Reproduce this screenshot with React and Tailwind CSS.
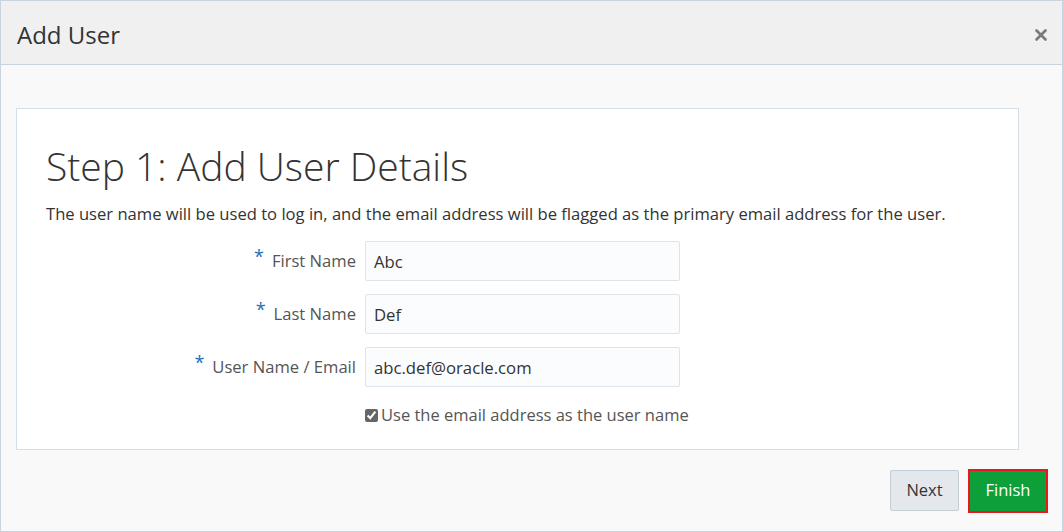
import { X } from 'lucide-react';

const fields = [
  { label: 'First Name', value: 'Abc' },
  { label: 'Last Name', value: 'Def' },
  { label: 'User Name / Email', value: 'abc.def@oracle.com' },
];

export default function App() {
  return (
    <div className="w-[1063px] h-[532px] border border-[#c7d3de] bg-[#f9f9f9] flex flex-col text-[#333] font-['Open_Sans',sans-serif]">
      {/* Header */}
      <div className="h-[64px] shrink-0 bg-[#f0f0f0] border-b border-[#c7d3de] flex items-center justify-between pl-[16px] pr-[12px] pt-[5px]">
        <h1 className="text-[24px] text-[#333]">Add User</h1>
        <X className="w-[18px] h-[18px] text-[#7a7a7a]" strokeWidth={3.5} />
      </div>

      {/* Body */}
      <div className="flex-1 px-[15px] pt-[43px]">
        <div className="w-[1003px] h-[342px] bg-white border border-[#d6dfe6] pl-[29px] pt-[33px]">
          <h2 className="text-[39px] font-light text-[#333] leading-[48px]">Step 1: Add User Details</h2>
          <p className="mt-[14px] text-[16.6px] text-[#333] leading-[20px]">
            The user name will be used to log in, and the email address will be flagged as the primary email address for the user.
          </p>

          <div className="mt-[17px] flex flex-col gap-[13px]">
            {fields.map(f => (
              <div key={f.label} className="flex items-center">
                <label className="w-[319px] pr-[9px] text-right text-[16.6px] text-[#555] flex justify-end items-start">
                  <span className="text-[#1d6fb8] text-[18px] leading-[14px] mr-[8px]">*</span>
                  <span>{f.label}</span>
                </label>
                <input
                  readOnly
                  value={f.value}
                  className="w-[315px] h-[40px] border border-[#dfe4ea] rounded-[2px] bg-[#fbfcfd] px-[8px] text-[16.7px] text-[#333] outline-none"
                />
              </div>
            ))}
          </div>

          <div className="mt-[16px] ml-[319px] flex items-center">
            <input type="checkbox" checked readOnly className="w-[13px] h-[13px] accent-[#666] mr-[3px]" />
            <span className="text-[16.5px] text-[#555]">Use the email address as the user name</span>
          </div>
        </div>
      </div>

      {/* Footer */}
      <div className="h-[82px] shrink-0 flex items-center justify-end gap-[9px] pr-[14px] pb-[1px]">
        <button className="w-[69px] h-[41px] bg-[#e4e8ec] border border-[#c4ced7] rounded-[2px] text-[16.5px] text-[#333]">Next</button>
        <button className="w-[80px] h-[44px] bg-[#0c9f3a] border-2 border-[#e5191f] text-white text-[16.5px]">Finish</button>
      </div>
    </div>
  );
}
